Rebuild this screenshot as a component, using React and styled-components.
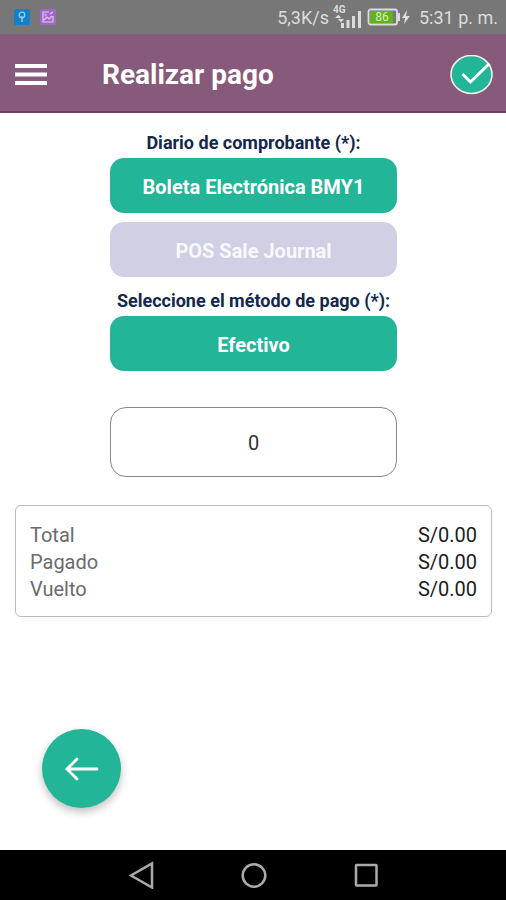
import { useState } from "react";
import styled, { createGlobalStyle } from "styled-components";

const journals = ["Boleta Electrónica BMY1", "POS Sale Journal"];

const totals = [
  { label: "Total", value: "S/0.00" },
  { label: "Pagado", value: "S/0.00" },
  { label: "Vuelto", value: "S/0.00" },
];

const App = () => {
  const [journal, setJournal] = useState(journals[0]);
  const [amount, setAmount] = useState("0");

  return (
    <Screen>
      <GlobalStyle />
      <StatusBar>
        <StatusGroup>
          <KeyIcon />
          <PictureIcon />
        </StatusGroup>
        <StatusGroup $tight>
          <span>5,3K/s</span>
          <SignalIcon />
          <BatteryIcon />
          <Clock>5:31 p. m.</Clock>
        </StatusGroup>
      </StatusBar>

      <Header>
        <IconButton aria-label="Menú">
          <svg width="32" height="24" viewBox="0 0 32 24" fill="#fff">
            <path d="M0 1h32v4H0zM0 9.500h32v4H0zM0 18h32v4H0z" />
          </svg>
        </IconButton>
        <Title>Realizar pago</Title>
        <IconButton aria-label="Confirmar pago">
          <svg width="44" height="40" viewBox="0 0 44 40" fill="none">
            <ellipse cx="22.500" cy="19.500" rx="20.500" ry="19" fill="#23b598" stroke="#f4eef3" strokeWidth="1.600" />
            <path d="M13.500 19l8 8L40.500 8.500" stroke="#fff" strokeWidth="3" />
          </svg>
        </IconButton>
      </Header>

      <Main>
        <Form onSubmit={(e) => e.preventDefault()}>
          <Group role="group" aria-labelledby="journal-label">
            <Label id="journal-label">Diario de comprobante (*):</Label>
            <Options>
              {journals.map((name) => (
                <Option
                  key={name}
                  type="button"
                  $active={name === journal}
                  aria-pressed={name === journal}
                  onClick={() => setJournal(name)}
                >
                  {name}
                </Option>
              ))}
            </Options>
          </Group>
          <Group role="group" aria-labelledby="method-label">
            <Label id="method-label">Seleccione el método de pago (*):</Label>
            <Option type="button" $active aria-pressed>
              Efectivo
            </Option>
          </Group>
          <Amount
            aria-label="Monto"
            inputMode="decimal"
            value={amount}
            onChange={(e) => setAmount(e.target.value)}
          />
        </Form>

        <Summary>
          {totals.map(({ label, value }) => (
            <SummaryRow key={label}>
              <dt>{label}</dt>
              <dd>{value}</dd>
            </SummaryRow>
          ))}
        </Summary>

        <BackButton aria-label="Volver">
          <svg width="34" height="24" viewBox="0 0 34 24" fill="none" stroke="#fff" strokeWidth="2.800" strokeLinecap="round">
            <path d="M32 12H2M12 2L2 12l10 10" />
          </svg>
        </BackButton>
      </Main>

      <NavBar>
        <NavButton aria-label="Atrás">
          <svg width="26" height="28" viewBox="0 0 26 28">
            <path d="M23 2.500v24L2 14.500z" />
          </svg>
        </NavButton>
        <NavButton aria-label="Inicio">
          <svg width="26" height="28" viewBox="0 0 26 28">
            <circle cx="13" cy="14.500" r="11.300" />
          </svg>
        </NavButton>
        <NavButton aria-label="Recientes">
          <svg width="26" height="28" viewBox="0 0 26 28">
            <rect x="3" y="4" width="20.500" height="20.500" rx="0.500" />
          </svg>
        </NavButton>
      </NavBar>
    </Screen>
  );
};

const KeyIcon = () => (
  <svg width="16" height="16" viewBox="0 0 16 16" fill="none" stroke="#8fcbee">
    <rect width="16" height="16" rx="1.500" fill="#1680c4" stroke="none" />
    <circle cx="8" cy="6" r="2.800" strokeWidth="1.300" />
    <path d="M8 7v6" strokeWidth="1.500" />
  </svg>
);

const PictureIcon = () => (
  <svg width="16" height="16" viewBox="0 0 16 16" fill="none" stroke="#e2c9f2">
    <rect width="16" height="16" rx="2" fill="#a166c9" stroke="none" />
    <path d="M9 3H3v10h10V7M4 11l3-3 2 2 3-3M10 5l3-2" strokeWidth="1.200" />
    <circle cx="5.500" cy="5.800" r="0.900" strokeWidth="0.800" />
  </svg>
);

const SignalIcon = () => (
  <svg width="30" height="26" viewBox="0 0 30 26" fill="#dcdcdc">
    <text x="0" y="9" fontSize="10" fontWeight="700">
      4G
    </text>
    <path d="M2 14l3.500-3.500L8 14zM5 15h6l-3 3.500zM8 19h3v5H8zM13.500 16h3v8h-3zM19 12h3v12h-3zM25 7h3v17h-3z" />
  </svg>
);

const BatteryIcon = () => (
  <svg width="44" height="18" viewBox="0 0 44 18">
    <rect x="1.500" y="1.500" width="28.500" height="15" rx="2" fill="#777" stroke="#dcdcdc" strokeWidth="1.800" />
    <rect x="3" y="3" width="23" height="12" fill="#60b31c" />
    <path d="M30 5h3v8h-3z" fill="#dcdcdc" />
    <text x="15" y="13" fontSize="12" textAnchor="middle" fill="#d9eec2">
      86
    </text>
    <path d="M40 2l-5 8h3l-1 6 6-8h-4z" fill="#dcdcdc" />
  </svg>
);

const GlobalStyle = createGlobalStyle`
  * {
    box-sizing: border-box;
  }

  body {
    margin: 0;
    background: #fff;
    font-family: Roboto, "Liberation Sans", sans-serif;
  }

  button,
  input {
    font-family: inherit;
  }

  svg {
    display: block;
    flex-shrink: 0;
  }
`;

const Screen = styled.div`
  min-height: 100vh;
  display: flex;
  flex-direction: column;
`;

const StatusBar = styled.div`
  display: flex;
  align-items: center;
  justify-content: space-between;
  height: 34px;
  padding: 0 8px 0 14px;
  background: #777;
  color: #dcdcdc;
  font-size: 18px;
`;

const StatusGroup = styled.div`
  display: flex;
  align-items: center;
  gap: ${({ $tight }) => ($tight ? "4px" : "10px")};
`;

const Clock = styled.time`
  margin-left: 4px;
`;

const Header = styled.header`
  display: flex;
  align-items: center;
  height: 79px;
  padding: 4px 13px 0 15px;
  background: #875a7b;
  border-bottom: 2px solid #6d4262;
`;

const IconButton = styled.button`
  display: flex;
  padding: 0;
  border: none;
  background: none;
  cursor: pointer;
`;

const Title = styled.h1`
  flex: 1;
  margin: 0 0 0 55px;
  font-weight: 700;
  font-size: 28px;
  line-height: 36px;
  color: #fff;
`;

const Main = styled.main`
  flex: 1;
  display: flex;
  flex-direction: column;
  padding: 15px 14px 42px 15px;
`;

const Form = styled.form`
  display: flex;
  flex-direction: column;
  gap: 9px;
  width: 60%;
  margin: 0 auto;
`;

const Group = styled.div`
  display: flex;
  flex-direction: column;
`;

const Options = styled.div`
  display: flex;
  flex-direction: column;
  gap: 9px;
`;

const Label = styled.span`
  font-weight: 700;
  font-size: 18px;
  line-height: 30px;
  text-align: center;
  white-space: nowrap;
  color: #12284c;
`;

const Option = styled.button`
  height: 55px;
  padding: 2px 0 0;
  border: none;
  border-radius: 14px;
  background: ${({ $active }) => ($active ? "#23b598" : "#d1cfe3")};
  color: ${({ $active }) => ($active ? "#fff" : "#f8f7fc")};
  font-weight: 700;
  font-size: 20px;
  cursor: pointer;
`;

const Amount = styled.input`
  width: 100%;
  height: 70px;
  margin-top: 27px;
  padding: 2px 0 0;
  border: 1px solid #888;
  border-radius: 16px;
  background: #fff;
  font-size: 20px;
  text-align: center;
  color: #333;
`;

const Summary = styled.dl`
  margin: 28px 0;
  padding: 16px 14px 13px;
  border: 1px solid #bbb;
  border-radius: 6px;
`;

const SummaryRow = styled.div`
  display: flex;
  justify-content: space-between;
  font-size: 20px;
  line-height: 27px;

  dt {
    color: #6b6b6b;
  }

  dd {
    margin: 0;
    color: #1c1c1c;
  }
`;

const BackButton = styled.button`
  display: flex;
  align-items: center;
  justify-content: center;
  width: 79px;
  height: 79px;
  margin: auto 0 0 27px;
  border: none;
  border-radius: 50%;
  background: #23b598;
  box-shadow: 0 4px 8px rgba(0, 0, 0, 0.25);
  cursor: pointer;
`;

const NavBar = styled.nav`
  display: flex;
  justify-content: center;
  align-items: center;
  gap: 86px;
  height: 50px;
  padding-left: 2px;
  background: #000;
`;

const NavButton = styled(IconButton)`
  svg {
    fill: none;
    stroke: #aaa;
    stroke-width: 2.5;
  }
`;

export default App;
